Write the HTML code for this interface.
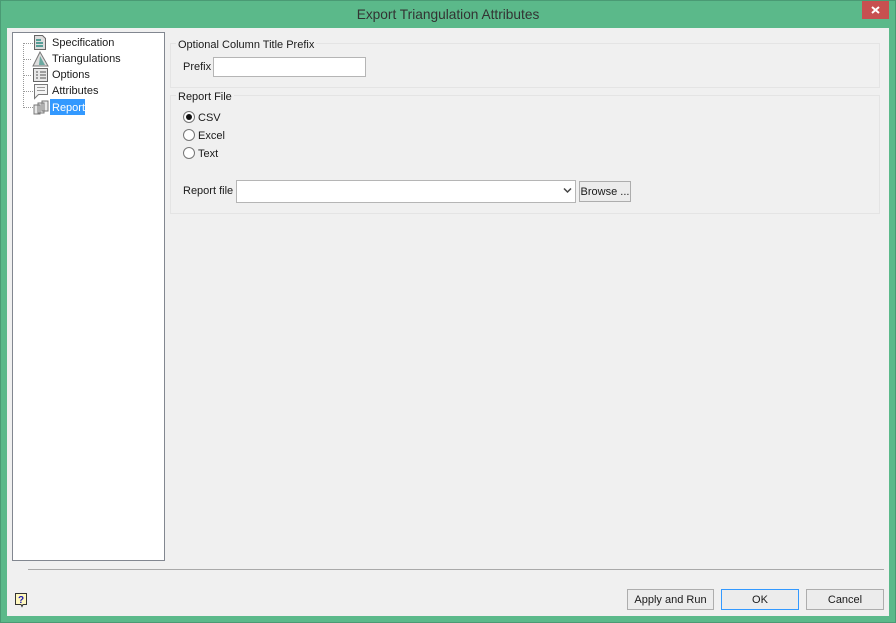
<!DOCTYPE html>
<html><head><meta charset="utf-8"><style>
html,body{margin:0;padding:0;background:#5bb98a}
body{width:896px;height:623px;position:relative;overflow:hidden;font-family:"Liberation Sans",sans-serif;font-size:11px;color:#1a1a1a}
.a{position:absolute;box-sizing:border-box}
.t{position:absolute;white-space:nowrap;line-height:14px;margin-top:1px}
.g{position:absolute;box-sizing:border-box;border:1px solid #e4e4e4}
.in{position:absolute;box-sizing:border-box;background:#fff;border:1px solid #b5b5b5}
.b{position:absolute;box-sizing:border-box;background:#ececec;border:1px solid #adadad;text-align:center;line-height:20px;white-space:nowrap}
.r{position:absolute;box-sizing:border-box;width:12px;height:12px;border:1px solid #777;border-radius:50%;background:#fff}
</style></head><body>
<div class="a" style="left:0;top:0;width:896px;height:623px;border:1px solid #4a9a74"></div>
<div class="t" style="left:0;width:896px;top:6px;text-align:center;font-size:13.7px;line-height:16px;color:#333">Export Triangulation Attributes</div>
<div class="a" style="left:862px;top:1px;width:27px;height:18px;background:#c75050"></div>
<svg class="a" style="left:862px;top:1px" width="27" height="18"><path d="M10 6L17 12M17 6L10 12" stroke="#fff" stroke-width="2"/></svg>
<div class="a" style="left:7px;top:28px;width:882px;height:588px;background:#f0f0f0"></div>

<div class="a" style="left:12px;top:32px;width:153px;height:529px;background:#fff;border:1px solid #828790"></div>
<svg class="a" style="left:12px;top:32px" width="60" height="90">
<path d="M12 11.500H21M12 27.500H20M12 43.500H20M12 59.500H21M12 75.500H21M11.500 11V76" stroke="#999" stroke-dasharray="1 1" fill="none"/>
<path d="M22.500 3.500h8l3 3v11h-11z" fill="#ddd" stroke="#666"/><path d="M24 8h5M24 11h7M24 14h7" stroke="#2a8a80" stroke-width="1.500"/>
<path d="M28 20L21 34H36z" fill="#ddd" stroke="#777"/><path d="M28 24L33 33H27z" fill="#6aa8a0"/>
<rect x="21.500" y="36.500" width="14" height="13" fill="#e8e8e8" stroke="#666"/><path d="M24 40h2M24 43h2M24 46h2M28 40h6M28 43h6M28 46h6" stroke="#555"/>
<path d="M22.500 52.500h13v10h-9l-4 4z" fill="#f4f4f4" stroke="#777"/><path d="M25 55.500h8M25 58.500h8" stroke="#999"/>
<path d="M22 73h6v9h-6zM26 71h6v10h-6zM30 69h6v10h-6z" fill="#e8e8e8" stroke="#777"/>
</svg>
<div class="t" style="left:52px;top:35px">Specification</div>
<div class="t" style="left:52px;top:51px">Triangulations</div>
<div class="t" style="left:52px;top:67px">Options</div>
<div class="t" style="left:52px;top:83px">Attributes</div>
<div class="a" style="left:50px;top:99px;width:35px;height:16px;background:#3399ff"></div>
<div class="t" style="left:52px;top:100px;color:#fff">Report</div>

<div class="g" style="left:170px;top:43px;width:710px;height:45px"></div>
<div class="t" style="left:176px;top:37px;background:#f0f0f0;padding:0 2px">Optional Column Title Prefix</div>
<div class="t" style="left:183px;top:59px">Prefix</div>
<div class="in" style="left:213px;top:57px;width:153px;height:20px"></div>

<div class="g" style="left:170px;top:95px;width:710px;height:119px"></div>
<div class="t" style="left:176px;top:89px;background:#f0f0f0;padding:0 2px">Report File</div>
<div class="r" style="left:183px;top:111px"></div><div class="a" style="left:186px;top:114px;width:6px;height:6px;border-radius:50%;background:#111"></div>
<div class="t" style="left:198px;top:110px">CSV</div>
<div class="r" style="left:183px;top:129px"></div><div class="t" style="left:198px;top:128px">Excel</div>
<div class="r" style="left:183px;top:147px"></div><div class="t" style="left:198px;top:146px">Text</div>
<div class="t" style="left:183px;top:183px">Report file</div>
<div class="in" style="left:236px;top:180px;width:340px;height:23px"></div>
<svg class="a" style="left:563px;top:187px" width="10" height="8"><path d="M1 1.500L4.500 5L8 1.500" stroke="#444" stroke-width="1.500" fill="none"/></svg>
<div class="b" style="left:579px;top:181px;width:52px;height:21px">Browse ...</div>

<div class="a" style="left:28px;top:569px;width:856px;height:1px;background:#a9a9a9"></div>
<svg class="a" style="left:14px;top:592px" width="14" height="16"><path d="M1.500 1.500h11v11H9L8 14.500 7 12.500H1.500z" fill="#fff8c0" stroke="#333"/><text x="7" y="11" font-size="10" font-weight="bold" text-anchor="middle" fill="#1a1ab0" font-family="Liberation Sans">?</text></svg>
<div class="b" style="left:627px;top:589px;width:87px;height:21px">Apply and Run</div>
<div class="b" style="left:721px;top:589px;width:78px;height:21px;border-color:#3399ff">OK</div>
<div class="b" style="left:806px;top:589px;width:78px;height:21px">Cancel</div>
</body></html>
